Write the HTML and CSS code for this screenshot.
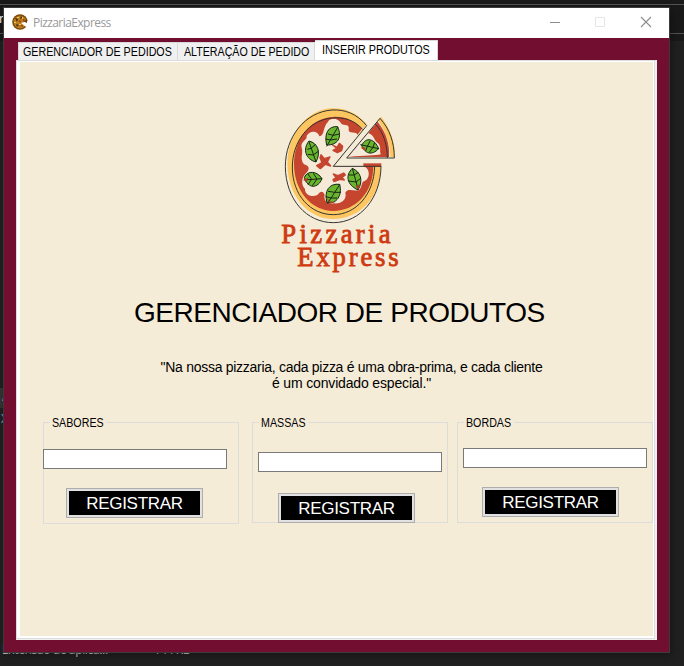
FILE: index.html
```html
<!DOCTYPE html>
<html lang="pt-BR">
<head>
<meta charset="utf-8">
<title>PizzariaExpress</title>
<link rel="stylesheet" href="styles.css">
</head>
<body>
<div class="desktop">
  <div class="rule rule-top"></div>
  <div class="rule rule-head"></div>
  <div class="head-char">n</div>
  <div class="ticks"></div>
  <div class="selected-row"><span>A</span></div>
  <div class="after-row">X</div>
  <div class="file-row"><span>Extensão de aplica...</span><span>144 KB</span></div>
</div>
<main class="window">
  <header class="titlebar">
    <svg class="app-icon" viewBox="0 0 16 16">
      <circle cx="8" cy="8" r="7.8" fill="#7d4a0c"/>
      <circle cx="8" cy="8" r="6.3" fill="#b9801f"/>
      <path d="M3 4l3 1-1 3zM9 2l2 2-3 1zM4 10l3 1-2 2z" fill="#4d2a12"/>
      <path d="M7 6l2 1-1 2zM11 5l2 1-2 1zM8 12l2-1 1 2z" fill="#a8281a"/>
      <path d="M5 3h2v1H5zM2 8h2v1H2zM7 10h2v1H7zM10 3h1v2h-1z" fill="#e8c75c"/>
      <path d="M9 9l7-2v4l-2 2z" fill="#fff"/>
      <path d="M11 7l4-1v3z" fill="#6e3a10"/>
    </svg>
    <span class="app-name">PizzariaExpress</span>
    <svg class="controls" viewBox="0 0 104 12" fill="none">
      <path d="M0 6.5h10" stroke="#8c8c8c"/>
      <path d="M45.500 1.500h9v9h-9z" stroke="#e6e6e6"/>
      <path d="M91 1l10 10M101 1l-10 10" stroke="#8c8c8c" stroke-width="1.100"/>
    </svg>
  </header>
  <nav class="tabs">
    <div class="tab tab-orders"><span>GERENCIADOR DE PEDIDOS</span></div>
    <div class="tab tab-change"><span>ALTERAÇÃO DE PEDIDO</span></div>
    <div class="tab tab-active"><span>INSERIR PRODUTOS</span></div>
  </nav>
  <section class="panel">
    <div class="page">
      <svg class="logo" viewBox="0 0 420 540">
        <path d="M290 75C255 36 220 26 183 28C108 33 54 106 52 192C52 290 113 360 190 360C270 360 332 296 332 202H190Z" fill="#fdc660"/>
        <path d="M276 89C249 62 222 51 187 54C120 59 73 120 72 195C72 274 122 335 190 336C257 336 310 281 310 202H190Z" fill="#c6452f"/>
        <path d="M280 193h54v10h-54z" fill="#c6452f"/>
        <path d="M174 68C182 55 205 57 214 74C222 82 239 72 236 91C235 108 264 94 263 111L190 202H280C303 209 300 242 282 247C273 250 277 267 266 274C247 277 235 267 226 281C232 301 213 315 193 313C169 318 160 300 164 288C158 270 148 280 142 288C124 297 104 286 105 270C93 259 94 235 108 223C123 208 115 199 102 196C88 177 101 165 95 146C90 126 113 124 110 110C122 90 146 98 148 112C165 109 157 86 174 68Z" fill="#f5ead8"/>
        <path d="M153 167l10 12 17-5-8 15 10 12-16-5-15 13-11-9 16-9-6-15zM188 138l13 7 7-12 10 9-3 13-13 6-13-7 11-6zM190 225l14 5 17-8 5 6-10 7 7 8-13-2-18 7-3-6 9-6z" fill="#c6452f" stroke="#c6452f" stroke-width="4" stroke-linejoin="round"/>
        <path d="M333 53C363 91 376 130 374 174H361C361 132 345 95 324 63Z" fill="#fdc660"/>
        <path d="M323 68C349 101 360 137 357 174H235Z" fill="#c6452f"/>
        <path d="M294 102C316 109 309 124 326 134C335 146 327 157 333 166C312 171 286 168 235 174Z" fill="#f5ead8"/>
        <g fill="#69b52d" stroke="#172517" stroke-width="3">
          <path d="M203 83C174 80 162 105 170 138C202 139 218 116 203 83Z"/><path d="M203 85L170 142M190 109l-16-4M190 109l18-4M181 123l-14-3M181 123l20-3" fill="none"/>
          <path d="M117 126C97 151 107 181 138 189C154 159 143 132 117 126Z"/><path d="M117 128L138 189M123 148l-11 3M123 148l14-12M130 168l-17-2M130 168l16-12" fill="none"/>
          <path d="M103 235C113 213 142 216 156 239C144 269 114 271 103 235Z"/><path d="M101 243L156 239M125 241l-11-16M125 241l-11 16M141 240l-11-17M141 240l-14 20" fill="none"/>
          <path d="M209 256C178 252 161 276 171 311C199 317 218 289 209 256Z"/><path d="M209 257L173 313M194 280l-20-3M194 280l19 0M183 297l-16-4M183 297l19 0" fill="none"/>
          <path d="M247 208C226 229 229 256 264 273C281 244 272 219 247 208Z"/><path d="M247 208L265 273M252 228l-15 0M252 228l13-8M258 249l-22-3M258 249l14-11" fill="none"/>
          <path d="M275 139C288 112 314 119 326 149C306 171 284 164 275 139Z"/><path d="M271 137L326 149M292 142l9-17M292 142l-5 14M309 145l5-15M309 145l-12 16" fill="none"/>
        </g>
        <path d="M170 293q7 18 25 16q-20 10-25-16M256 260q8 1 12-5l-3 18zM101 239q7 3 15-5l-8 17zM272 146q14-7 15 9z" fill="#b83a25"/>
        <g fill="none" stroke="#343631" stroke-width="3">
          <path d="M290 80C260 43 223 31 186 33C105 39 46 114 46 203C47 302 110 371 190 371C272 371 332 296 333 202H190Z"/>
          <path d="M278 91C251 62 221 54 187 57C118 62 66 127 67 207C68 288 121 347 190 347C258 347 312 286 314 202"/>
          <path d="M330 58C359 90 373 130 373 177H230ZM316 75C342 102 352 139 352 177"/>
        </g>
        <g class="brand">
          <text x="34" y="433" textLength="328">Pizzaria</text>
          <text x="82" y="501" textLength="304">Express</text>
        </g>
      </svg>
      <h1>GERENCIADOR DE PRODUTOS</h1>
      <p class="quote">"Na nossa pizzaria, cada pizza é uma obra-prima, e cada cliente<br><span>é um convidado especial."</span></p>
      <div class="groups">
        <fieldset class="group flavours"><legend><span>SABORES</span></legend><input type="text" aria-label="Sabores"><button>REGISTRAR</button></fieldset>
        <fieldset class="group doughs"><legend><span>MASSAS</span></legend><input type="text" aria-label="Massas"><button>REGISTRAR</button></fieldset>
        <fieldset class="group crusts"><legend><span>BORDAS</span></legend><input type="text" aria-label="Bordas"><button>REGISTRAR</button></fieldset>
      </div>
    </div>
  </section>
</main>
</body>
</html>
```
FILE: styles.css
```css
* { box-sizing: border-box; }
body {
  margin: 0;
  width: 684px;
  height: 666px;
  overflow: hidden;
  background: #202020;
  font-family: "Liberation Sans", Arial, sans-serif;
  color: #000;
}
.desktop {
  position: absolute;
  inset: 0;
  overflow: hidden;
  background: linear-gradient(#191919 0 41px, #202020 41px);
  font: 12px "Noto Sans", sans-serif;
}
.rule { position: absolute; left: 0; right: 0; height: 1px; background: #535353; }
.rule-top { top: 4px; }
.rule-head { top: 33px; }
.head-char { position: absolute; left: -1px; top: 10px; color: #eee; }
.ticks {
  position: absolute;
  left: 3px;
  top: 78px;
  width: 1px;
  height: 577px;
  background: repeating-linear-gradient(#7480b8 0 9px, transparent 9px 21px);
}
.selected-row { position: absolute; top: 388px; width: 20px; height: 20px; background: #333; color: #6c9dc0; }
.selected-row span { position: relative; left: 2px; }
.after-row { position: absolute; left: 1px; top: 410px; color: #6c9dc0; background: #202020; }
.file-row { position: absolute; left: 2px; top: 641px; display: flex; gap: 46px; color: #bcbcbc; letter-spacing: -.4px; }
.window {
  position: relative;
  margin: 8px 0 0 4px;
  width: 665px;
  height: 644px;
  background: #720f31;
  box-shadow: 0 0 0 1px #3e3a3b, 2px 3px 8px 1px rgba(0, 0, 0, .3);
}
.titlebar { display: flex; align-items: center; height: 30px; padding: 0 18px 0 8px; background: #fff; }
.app-icon { width: 16px; height: 16px; margin-top: -2px; }
.app-name { margin-left: 5px; font: 12px/16px "Open Sans", sans-serif; letter-spacing: -.56px; color: #999; }
.controls { width: 104px; height: 12px; margin: -2px -3px 0 auto; }
.tabs { display: flex; align-items: flex-end; height: 22px; padding-left: 14px; font-size: 12px; white-space: nowrap; }
.tab { height: 18px; border: 1px solid #d9d9d9; border-width: 1px 1px 0 0; background: #f0f0f0; line-height: 19px; padding-left: 5px; }
.tab span, legend span { display: inline-block; transform-origin: 0 50%; }
.tab-orders { width: 160px; border-left-width: 1px; padding-left: 4px; }
.tab-orders span { transform: scaleX(.893); }
.tab-change { width: 137px; padding-left: 6px; }
.tab-change span { transform: scaleX(.888); }
.tab-active { width: 123px; height: 20px; padding-left: 7px; background: #fff; }
.tab-active span { transform: scaleX(.9); }
.panel {
  width: 641px;
  height: 580px;
  margin-left: 12px;
  border: 1px solid #dcdcdc;
  border-right: 2px solid #f0f0f0;
  border-bottom: 1px solid #f0f0f0;
  background: #fff;
  padding: 1px 2px 3px 3px;
  box-shadow: inset -1px -1px #dcdcdc;
}
.page { width: 633px; height: 574px; background: #f5ecd8; }
.logo { display: block; width: 140px; height: 180px; position: relative; margin-left: 250px; top: 37px; }
.brand { fill: #cf3a10; font: 80px "Liberation Serif", serif; stroke: #cf3a10; stroke-width: 2.500px; }
h1 { margin: 54px 0 0 114px; font-size: 28px; line-height: 34px; font-weight: 400; white-space: nowrap; letter-spacing: -.45px; }
.quote { margin: 29px 0 0 140px; width: 383px; font-size: 14px; line-height: 16px; text-align: center; white-space: nowrap; letter-spacing: -.28px; }
.quote span { letter-spacing: -.16px; }
.groups { display: grid; grid-template-columns: 196px 196px 196px; column-gap: 13px; margin: 25px 0 0 23px; }
.group {
  position: relative;
  display: flex;
  flex-direction: column;
  min-width: 0;
  width: 196px;
  height: 108px;
  margin: 0;
  padding: 0;
  border: 1px solid #dcdcdc;
}
.crusts { margin-left: -4px; }
.doughs, .crusts { height: 107px; }
legend { width: 56px; margin-left: 6px; padding: 0 2px; font-size: 12px; line-height: 13px; white-space: nowrap; }
legend span { transform: translateY(1px) scaleX(.89); }
.doughs legend, .crusts legend { width: 50px; }
input { display: block; flex-shrink: 0; width: 184px; height: 20px; margin: 20px 0 0 -1px; padding: 0; border: 1px solid #7a7a7a; background: #fff; }
button {
  display: block;
  flex-shrink: 0;
  width: 137px;
  height: 30px;
  margin: 19px 0 0 22px;
  padding: 1px 0 0;
  border: 1px solid #adadad;
  box-shadow: inset 0 0 0 2px #e1e1e1;
  background: #000;
  color: #fff;
  font: 17px "Liberation Sans", sans-serif;
  letter-spacing: -.3px;
}
.doughs input { margin: 23px 0 0 5px; }
.doughs button { margin: 21px 0 0 25px; }
.crusts input { margin: 19px 0 0 5px; }
.crusts button { margin: 19px 0 0 24px; }
```
